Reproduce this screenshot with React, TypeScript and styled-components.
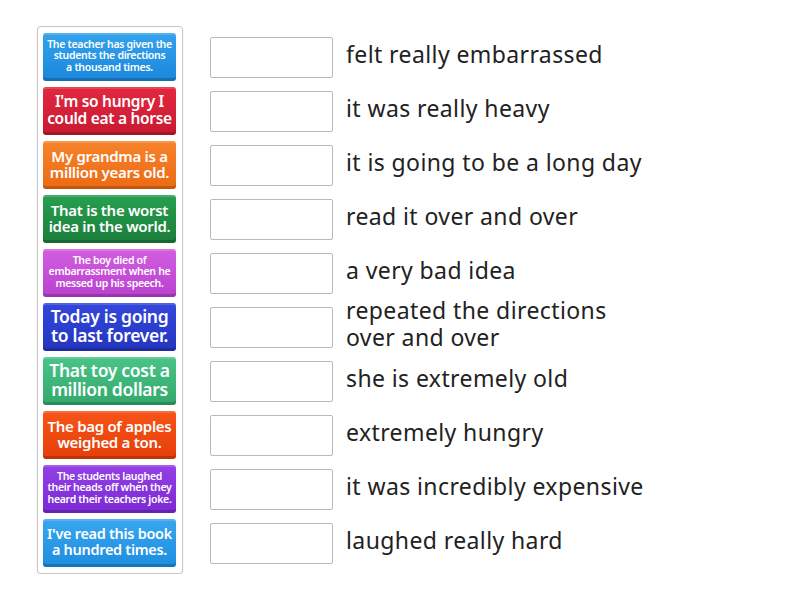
import styled, { createGlobalStyle } from "styled-components";

const GlobalStyle = createGlobalStyle`
    body {
        margin: 0;
        background: white;
        font-family: "Noto Sans", "Open Sans", sans-serif;
    }
`

const Page = styled.div`
    display: flex;
    align-items: flex-start;
    padding: 26px 0 0 37px;
    gap: 27px;
`

const TileBox = styled.div`
    display: flex;
    flex-direction: column;
    gap: 6px;
    width: 133px;
    padding: 6px 6px 6px 5px;
    border: 1px solid #c8c8c8;
    border-radius: 4px;
    box-shadow: 0 1px 2px rgba(0, 0, 0, 0.12);
    background: white;
`

/* line breaks are fixed in the data so every tile wraps like the original */
const Tile = styled.div<{ $color: string; $size: number }>`
    height: 48px;
    display: flex;
    align-items: center;
    justify-content: center;
    text-align: center;
    white-space: pre-line;
    box-sizing: border-box;
    padding: 0 1px 2px;
    border-radius: 3px;
    background: ${(p) => p.$color};
    box-shadow: inset 0 -3px 0 rgba(0, 0, 0, 0.18), inset 0 2px 0 rgba(255, 255, 255, 0.15);
    color: white;
    font-weight: 600;
    font-size: ${(p) => p.$size}px;
    line-height: ${(p) => (p.$size > 12 ? 1.08 : 1.1)};
    letter-spacing: -0.3px;
`

const Answers = styled.div`
    display: flex;
    flex-direction: column;
    gap: 6px;
    padding-top: 7px;
`

const Row = styled.div`
    height: 48px;
    display: flex;
    align-items: center;
    gap: 13px;
`

const Slot = styled.div`
    width: 121px;
    height: 39px;
    border: 1px solid #b9b9b9;
    border-radius: 2px;
    background: white;
`

const Meaning = styled.div`
    font-size: 23px;
    line-height: 27px;
    letter-spacing: 0.4px;
    color: #222;
    width: 305px;
    padding-bottom: 6px;
`

const tiles = [
    { text: "The teacher has given the\nstudents the directions\na thousand times.", color: "linear-gradient(#34a3ec, #1a87dc)", size: 10.5 },
    { text: "I'm so hungry I\ncould eat a horse", color: "linear-gradient(#e2283f, #c81a32)", size: 15.5 },
    { text: "My grandma is a\nmillion years old.", color: "linear-gradient(#f7832a, #ec6a14)", size: 15 },
    { text: "That is the worst\nidea in the world.", color: "linear-gradient(#27a04f, #1b7d3b)", size: 15 },
    { text: "The boy died of\nembarrassment when he\nmessed up his speech.", color: "linear-gradient(#d35ee0, #b941cf)", size: 10.5 },
    { text: "Today is going\nto last forever.", color: "linear-gradient(#3447dc, #2435bf)", size: 17.5 },
    { text: "That toy cost a\nmillion dollars", color: "linear-gradient(#49c487, #33a86c)", size: 17.5 },
    { text: "The bag of apples\nweighed a ton.", color: "linear-gradient(#f75418, #e43f08)", size: 15 },
    { text: "The students laughed\ntheir heads off when they\nheard their teachers joke.", color: "linear-gradient(#9440e6, #7b29d4)", size: 10.5 },
    { text: "I've read this book\na hundred times.", color: "linear-gradient(#39a6ee, #1d8de0)", size: 14.5 },
]

const meanings = [
    "felt really embarrassed",
    "it was really heavy",
    "it is going to be a long day",
    "read it over and over",
    "a very bad idea",
    "repeated the directions over and over",
    "she is extremely old",
    "extremely hungry",
    "it was incredibly expensive",
    "laughed really hard",
]

export default function App() {
    return (
        <>
            <GlobalStyle/>
            <Page>
                <TileBox>
                    {tiles.map((t) => (
                        <Tile key={t.text} $color={t.color} $size={t.size}>{t.text}</Tile>
                    ))}
                </TileBox>
                <Answers>
                    {meanings.map((m) => (
                        <Row key={m}>
                            <Slot/>
                            <Meaning>{m}</Meaning>
                        </Row>
                    ))}
                </Answers>
            </Page>
        </>
    );
}
